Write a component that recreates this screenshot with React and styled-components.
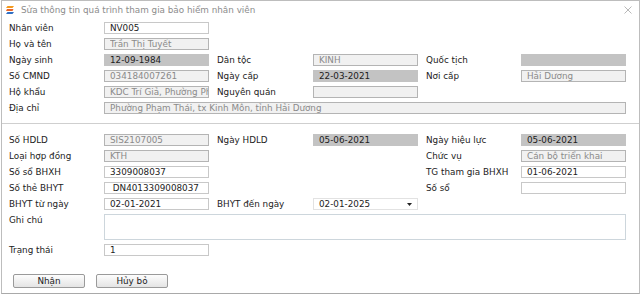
import styled, { createGlobalStyle } from "styled-components"

const Global = createGlobalStyle`
    html, body {
        margin: 0;
        background: #ffffff;
    }
    body {
        font-family: "DejaVu Sans", Verdana, sans-serif;
        font-size: 8.8px;
        color: #222;
    }
`

const Janela = styled.div`
    box-sizing: border-box;
    margin-left: 1px;
    width: 639px;
    height: 294px;
    border: 1px solid #bdbdbd;
    border-bottom-color: #a9a9a9;
    background: #fff;
    display: flex;
    flex-direction: column;
`

const Titulo = styled.div`
    height: 17px;
    display: flex;
    align-items: center;
    padding: 0 7px 0 4px;
    gap: 7px;
    color: #8c8c8c;
`

const Fechar = styled.svg`
    margin-left: auto;
`

const Secao = styled.div`
    display: flex;
    flex-direction: column;
    gap: 4px;
    padding-left: 7px;
    padding-top: ${p => p.$top || 0}px;
`

const Linha = styled.div`
    display: grid;
    grid-template-columns: 95px 105px 104px 105px 103px 105px;
    height: ${p => p.$h || 12}px;
    align-items: ${p => p.$top ? "start" : "center"};
`

const Rotulo = styled.span`
    padding-left: ${p => p.$col ? 8 : 0}px;
    line-height: 12px;
    white-space: nowrap;
`

const Campo = styled.input`
    box-sizing: border-box;
    height: 12px;
    width: 100%;
    margin: 0;
    padding: 0 0 0 5px;
    font: inherit;
    outline: none;
    border: 1px solid ${p => p.$tipo === "cinza" ? "#c3c3c3" : p.$tipo === "leitura" ? "#b4b4b4" : "#c8c8c8"};
    background: ${p => p.$tipo === "cinza" ? "#c3c3c3" : p.$tipo === "leitura" ? "#f1f1f1" : "#fff"};
    color: ${p => p.$tipo === "leitura" ? "#8a8a8a" : "#1c1c1c"};
    grid-column: ${p => p.$span ? "2 / -1" : "auto"};
    white-space: pre;
`

const Nota = styled.textarea`
    box-sizing: border-box;
    grid-column: 2 / -1;
    height: 26px;
    margin: 0;
    border: 1px solid #cdd6dc;
    background: #fff;
    resize: none;
    font: inherit;
    outline: none;
`

const Seletor = styled.div`
    box-sizing: border-box;
    height: 12px;
    display: flex;
    align-items: center;
    justify-content: space-between;
    padding: 0 5px;
    border: 1px solid #e2e2e2;
    background: #fff;
    color: #1c1c1c;
`

const Separador = styled.div`
    height: 1px;
    background: #cfcfcf;
    margin: 9px 0 10px;
`

const Botoes = styled.div`
    display: flex;
    gap: 11px;
    padding: 18px 0 0 11px;
`

const Butao = styled.button`
    box-sizing: border-box;
    width: 72px;
    height: 14px;
    padding: 0;
    font: inherit;
    color: #222;
    border: 1px solid #9a9a9a;
    border-radius: 2px;
    background: linear-gradient(#fdfdfd, #e4e4e4);
`

function Icone() {
    return (
        <svg width="8" height="8" viewBox="0 0 8 8">
            <polygon points="1.5,0 8,0 6.5,2 0,2" fill="#f39a1e" />
            <polygon points="1,3 7.5,3 6.5,5 0,5" fill="#e8642a" />
            <polygon points="1.5,6 8,6 6.5,8 0,8" fill="#2f6fc4" />
        </svg>
    )
}

export default function App() {
    return (
        <>
            <Global />
            <Janela>
                <Titulo>
                    <Icone />
                    <span>Sửa thông tin quá trình tham gia bảo hiểm nhân viên</span>
                    <Fechar width="8" height="8" viewBox="0 0 8 8">
                        <path d="M0.5 0.5 L7.5 7.5 M7.5 0.5 L0.5 7.5" stroke="#b0b0b0" strokeWidth="0.9" />
                    </Fechar>
                </Titulo>

                <Secao $top={4}>
                    <Linha>
                        <Rotulo>Nhân viên</Rotulo>
                        <Campo readOnly value="NV005" />
                    </Linha>
                    <Linha>
                        <Rotulo>Họ và tên</Rotulo>
                        <Campo readOnly $tipo="leitura" value="Trần Thị Tuyết" />
                    </Linha>
                    <Linha>
                        <Rotulo>Ngày sinh</Rotulo>
                        <Campo readOnly $tipo="cinza" value="12-09-1984" />
                        <Rotulo $col>Dân tộc</Rotulo>
                        <Campo readOnly $tipo="leitura" value="KINH" />
                        <Rotulo $col>Quốc tịch</Rotulo>
                        <Campo readOnly $tipo="cinza" value="" />
                    </Linha>
                    <Linha>
                        <Rotulo>Số CMND</Rotulo>
                        <Campo readOnly $tipo="leitura" value="034184007261" />
                        <Rotulo $col>Ngày cấp</Rotulo>
                        <Campo readOnly $tipo="cinza" value="22-03-2021" />
                        <Rotulo $col>Nơi cấp</Rotulo>
                        <Campo readOnly $tipo="leitura" value="Hải Dương" />
                    </Linha>
                    <Linha>
                        <Rotulo>Hộ khẩu</Rotulo>
                        <Campo readOnly $tipo="leitura" value="KDC Trí Giả, Phường Phạm Thái" />
                        <Rotulo $col>Nguyên quán</Rotulo>
                        <Campo readOnly $tipo="leitura" value="" />
                    </Linha>
                    <Linha>
                        <Rotulo>Địa chỉ</Rotulo>
                        <Campo readOnly $span $tipo="leitura" value="Phường Phạm Thái, tx Kinh Môn, tỉnh Hải Dương" />
                    </Linha>
                </Secao>

                <Separador />

                <Secao>
                    <Linha>
                        <Rotulo>Số HDLD</Rotulo>
                        <Campo readOnly $tipo="leitura" value="SIS2107005" />
                        <Rotulo $col>Ngày HDLD</Rotulo>
                        <Campo readOnly $tipo="cinza" value="05-06-2021" />
                        <Rotulo $col>Ngày hiệu lực</Rotulo>
                        <Campo readOnly $tipo="cinza" value="05-06-2021" />
                    </Linha>
                    <Linha>
                        <Rotulo>Loại hợp đồng</Rotulo>
                        <Campo readOnly $tipo="leitura" value="KTH" />
                        <span />
                        <span />
                        <Rotulo $col>Chức vụ</Rotulo>
                        <Campo readOnly $tipo="leitura" value="Cán bộ triển khai" />
                    </Linha>
                    <Linha>
                        <Rotulo>Số sổ BHXH</Rotulo>
                        <Campo readOnly value="3309008037" />
                        <span />
                        <span />
                        <Rotulo $col>TG tham gia BHXH</Rotulo>
                        <Campo readOnly value="01-06-2021" />
                    </Linha>
                    <Linha>
                        <Rotulo>Số thẻ BHYT</Rotulo>
                        <Campo readOnly value=" DN4013309008037" />
                        <span />
                        <span />
                        <Rotulo $col>Số sổ</Rotulo>
                        <Campo readOnly value="" />
                    </Linha>
                    <Linha>
                        <Rotulo>BHYT từ ngày</Rotulo>
                        <Campo readOnly value="02-01-2021" />
                        <Rotulo $col>BHYT đến ngày</Rotulo>
                        <Seletor>
                            <span>02-01-2025</span>
                            <svg width="5" height="3" viewBox="0 0 5 3">
                                <polygon points="0,0 5,0 2.5,3" fill="#222" />
                            </svg>
                        </Seletor>
                    </Linha>
                    <Linha $h={26} $top>
                        <Rotulo>Ghi chú</Rotulo>
                        <Nota readOnly value="" />
                    </Linha>
                    <Linha>
                        <Rotulo>Trạng thái</Rotulo>
                        <Campo readOnly value="1" />
                    </Linha>
                </Secao>

                <Botoes>
                    <Butao>Nhận</Butao>
                    <Butao>Hủy bỏ</Butao>
                </Botoes>
            </Janela>
        </>
    )
}
